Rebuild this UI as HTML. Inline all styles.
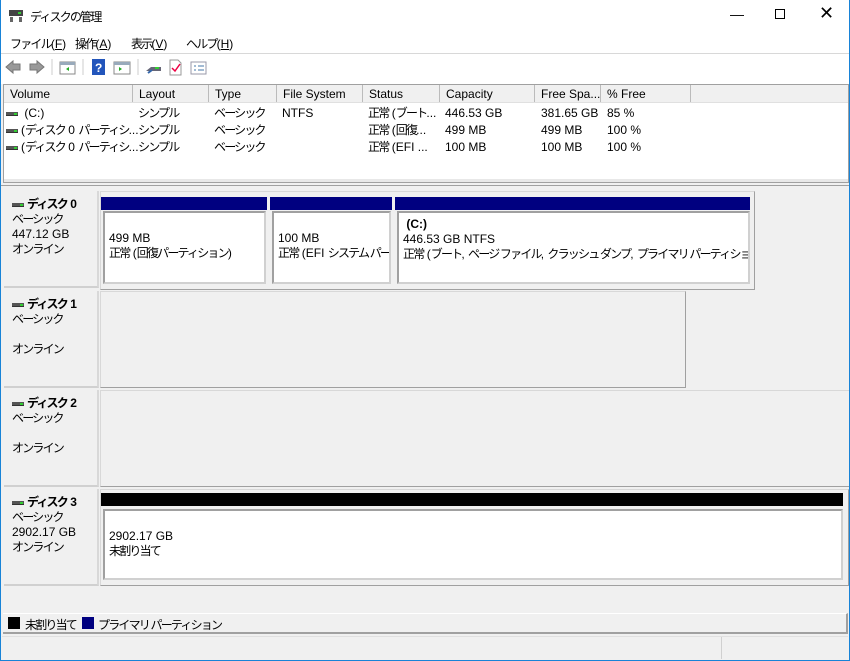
<!DOCTYPE html>
<html><head><meta charset="utf-8"><style>
*{margin:0;padding:0;box-sizing:border-box}
body{width:850px;height:661px;overflow:hidden;background:#f0f0f0;font-family:"Liberation Sans","Noto Sans CJK JP",sans-serif;font-size:12px;color:#000;position:relative}
.a{position:absolute;white-space:nowrap}
.j{letter-spacing:-1.8px}
.hdr{position:absolute;top:85px;height:18px;background:#f0f0f0;border-right:1px solid #bbb;padding:2px 0 0 6px;white-space:nowrap;overflow:hidden}
.drv{display:inline-block;width:12px;height:4px;background:#555;border-bottom:1px solid #333;vertical-align:middle;margin-right:3px;position:relative}
.drv:after{content:"";position:absolute;right:1px;top:1px;width:3px;height:2px;background:#3c3}
.lbl{position:absolute;left:4px;width:95px;background:#f0f0f0;border-right:2px solid #d8d8d8;border-bottom:2px solid #d0d0d0;padding:6px 0 0 8px;line-height:15px;white-space:nowrap}
.area{position:absolute;border:1px solid #a0a0a0;border-left:1px solid #d8d8d8;border-top:1px solid #d8d8d8}
.bar{position:absolute;height:13px;background:#000080}
.pbox{position:absolute;background:#fff;border:2px solid #d0d0d0;border-left-color:#a0a0a0;border-top-color:#a0a0a0;padding:18px 0 0 4px;line-height:15px;overflow:hidden;white-space:nowrap}
</style></head><body>
<div class="a" style="left:0;top:0;width:850px;height:661px;border:1px solid #1883d7;border-top:none"></div>
<div class="a" style="left:1px;top:0;width:848px;height:84px;background:#fff"></div>
<svg class="a" style="left:8px;top:9px" width="16" height="14"><rect x="1" y="1" width="14" height="6" fill="#444"/><rect x="10" y="3" width="3" height="2" fill="#3c3"/><rect x="2" y="8" width="3" height="5" fill="#666"/><rect x="11" y="8" width="3" height="5" fill="#666"/></svg>
<div class="a j" style="left:30px;top:8px">ディスクの管理</div>
<div class="a" style="left:730px;top:6px;font-size:14px">&#8212;</div>
<div class="a" style="left:775px;top:9px;width:10px;height:10px;border:1px solid #000"></div>
<div class="a" style="left:819px;top:3px;font-size:18px">&#10005;</div>
<div class="a" style="left:10px;top:35px"><span class="j">ファイル</span>(<u>F</u>)</div>
<div class="a" style="left:75px;top:35px"><span class="j">操作</span>(<u>A</u>)</div>
<div class="a" style="left:131px;top:35px"><span class="j">表示</span>(<u>V</u>)</div>
<div class="a" style="left:186px;top:35px"><span class="j">ヘルプ</span>(<u>H</u>)</div>
<div class="a" style="left:1px;top:53px;width:848px;height:1px;background:#d8d8d8"></div>
<svg class="a" style="left:5px;top:58px" width="220" height="18">
<path d="M1 9 L8 3 V6 H15 V12 H8 V15 Z" fill="#999" stroke="#777"/>
<path d="M39 9 L32 3 V6 H25 V12 H32 V15 Z" fill="#999" stroke="#777"/>
<line x1="47" y1="1" x2="47" y2="17" stroke="#ccc"/>
<rect x="55" y="4" width="15" height="12" fill="#fff" stroke="#888"/><rect x="55" y="4" width="15" height="3" fill="#9ab"/><path d="M64 9 l-3 2 l3 2z" fill="#2a2"/>
<line x1="78" y1="1" x2="78" y2="17" stroke="#ccc"/>
<rect x="87" y="1" width="13" height="16" fill="#2255bb"/><text x="90" y="14" fill="#fff" font-size="12" font-weight="bold" font-family="Liberation Sans">?</text>
<rect x="109" y="4" width="16" height="12" fill="#fff" stroke="#888"/><rect x="109" y="4" width="16" height="3" fill="#9ab"/><path d="M114 9 l3 2 l-3 2z" fill="#2a2"/>
<line x1="133" y1="1" x2="133" y2="17" stroke="#ccc"/>
<path d="M141 13 L146 9 H156 V13 Z" fill="#667"/><rect x="150" y="9" width="4" height="2" fill="#3c3"/><path d="M143 15 l4 -3" stroke="#36a" stroke-width="2"/>
<path d="M165 2 H173 L176 5 V17 H165 Z" fill="#fff" stroke="#999"/><path d="M167 10 l3 3 l5 -7" stroke="#e04" stroke-width="1.5" fill="none"/>
<rect x="186" y="4" width="15" height="12" fill="#fff" stroke="#99a"/><path d="M189 8h2M189 12h2M193 8h6M193 12h6" stroke="#47a"/>
</svg>
<div class="a" style="left:3px;top:84px;width:846px;height:99px;background:#fff;border:1px solid #a0a0a0"></div>
<div class="hdr" style="left:4px;width:129px">Volume</div>
<div class="hdr" style="left:133px;width:76px">Layout</div>
<div class="hdr" style="left:209px;width:68px">Type</div>
<div class="hdr" style="left:277px;width:86px">File System</div>
<div class="hdr" style="left:363px;width:77px">Status</div>
<div class="hdr" style="left:440px;width:95px">Capacity</div>
<div class="hdr" style="left:535px;width:66px">Free Spa...</div>
<div class="hdr" style="left:601px;width:90px">% Free</div>
<div class="hdr" style="left:691px;width:157px;border-right:none"></div>
<div class="a" style="left:4px;top:102px;width:844px;height:1px;background:#e0e0e0"></div>
<div class="a" style="left:6px;top:105px;line-height:17px"><span class="drv"></span> (C:)<br><span class="drv"></span>(<span class="j">ディスク</span> 0 <span class="j">パーティシ</span>...<br><span class="drv"></span>(<span class="j">ディスク</span> 0 <span class="j">パーティシ</span>...</div>
<div class="a j" style="left:138px;top:105px;line-height:17px">シンプル<br>シンプル<br>シンプル</div>
<div class="a j" style="left:214px;top:105px;line-height:17px">ベーシック<br>ベーシック<br>ベーシック</div>
<div class="a" style="left:282px;top:105px;line-height:17px">NTFS</div>
<div class="a" style="left:368px;top:105px;line-height:17px"><span class="j">正常</span> (<span class="j">ブート</span>...<br><span class="j">正常</span> (<span class="j">回復</span>...<br><span class="j">正常</span> (EFI ...</div>
<div class="a" style="left:445px;top:105px;line-height:17px">446.53 GB<br>499 MB<br>100 MB</div>
<div class="a" style="left:541px;top:105px;line-height:17px">381.65 GB<br>499 MB<br>100 MB</div>
<div class="a" style="left:607px;top:105px;line-height:17px">85 %<br>100 %<br>100 %</div>
<div class="a" style="left:4px;top:179px;width:844px;height:3px;background:#e8e8e8"></div>
<div class="a" style="left:1px;top:185px;width:848px;height:1px;background:#a0a0a0"></div>
<div class="lbl" style="top:191px;height:97px"><b><span class="drv"></span><span class="j">ディスク</span> 0</b><br><span class="j">ベーシック</span><br>447.12 GB<br><span class="j">オンライン</span></div>
<div class="area" style="left:100px;top:191px;width:655px;height:99px"></div>
<div class="bar" style="left:101px;top:197px;width:166px"></div>
<div class="bar" style="left:270px;top:197px;width:122px"></div>
<div class="bar" style="left:395px;top:197px;width:355px"></div>
<div class="pbox" style="left:103px;top:211px;width:163px;height:73px">499 MB<br><span class="j">正常</span> (<span class="j">回復パーティション</span>)</div>
<div class="pbox" style="left:272px;top:211px;width:119px;height:73px">100 MB<br><span class="j">正常</span> (EFI <span class="j">システム パーティション</span>)</div>
<div class="pbox" style="left:397px;top:211px;width:353px;height:73px;padding-top:4px">&nbsp;<b>(C:)</b><br>446.53 GB NTFS<br><span class="j">正常</span> (<span class="j">ブート</span>, <span class="j">ページ ファイル</span>, <span class="j">クラッシュ ダンプ</span>, <span class="j">プライマリ パーティション</span>)</div>
<div class="lbl" style="top:291px;height:97px"><b><span class="drv"></span><span class="j">ディスク</span> 1</b><br><span class="j">ベーシック</span><br><br><span class="j">オンライン</span></div>
<div class="area" style="left:100px;top:291px;width:586px;height:97px"></div>
<div class="lbl" style="top:390px;height:97px"><b><span class="drv"></span><span class="j">ディスク</span> 2</b><br><span class="j">ベーシック</span><br><br><span class="j">オンライン</span></div>
<div class="area" style="left:100px;top:390px;width:749px;height:97px;border-right:none"></div>
<div class="lbl" style="top:489px;height:97px"><b><span class="drv"></span><span class="j">ディスク</span> 3</b><br><span class="j">ベーシック</span><br>2902.17 GB<br><span class="j">オンライン</span></div>
<div class="area" style="left:100px;top:489px;width:749px;height:97px"></div>
<div class="bar" style="left:101px;top:493px;width:742px;background:#000"></div>
<div class="pbox" style="left:103px;top:509px;width:740px;height:71px">2902.17 GB<br><span class="j">未割り当て</span></div>
<div class="a" style="left:3px;top:613px;width:845px;height:21px;border-top:1px solid #fff;border-bottom:2px solid #a0a0a0;border-right:2px solid #a0a0a0"></div>
<div class="a" style="left:8px;top:617px;width:12px;height:12px;background:#000"></div>
<div class="a j" style="left:25px;top:616px">未割り当て</div>
<div class="a" style="left:82px;top:617px;width:12px;height:12px;background:#000080"></div>
<div class="a j" style="left:98px;top:616px">プライマリ パーティション</div>
<div class="a" style="left:721px;top:637px;width:1px;height:22px;background:#d0d0d0"></div>
<div class="a" style="left:2px;top:636px;width:846px;height:1px;background:#e0e0e0"></div>
</body></html>
